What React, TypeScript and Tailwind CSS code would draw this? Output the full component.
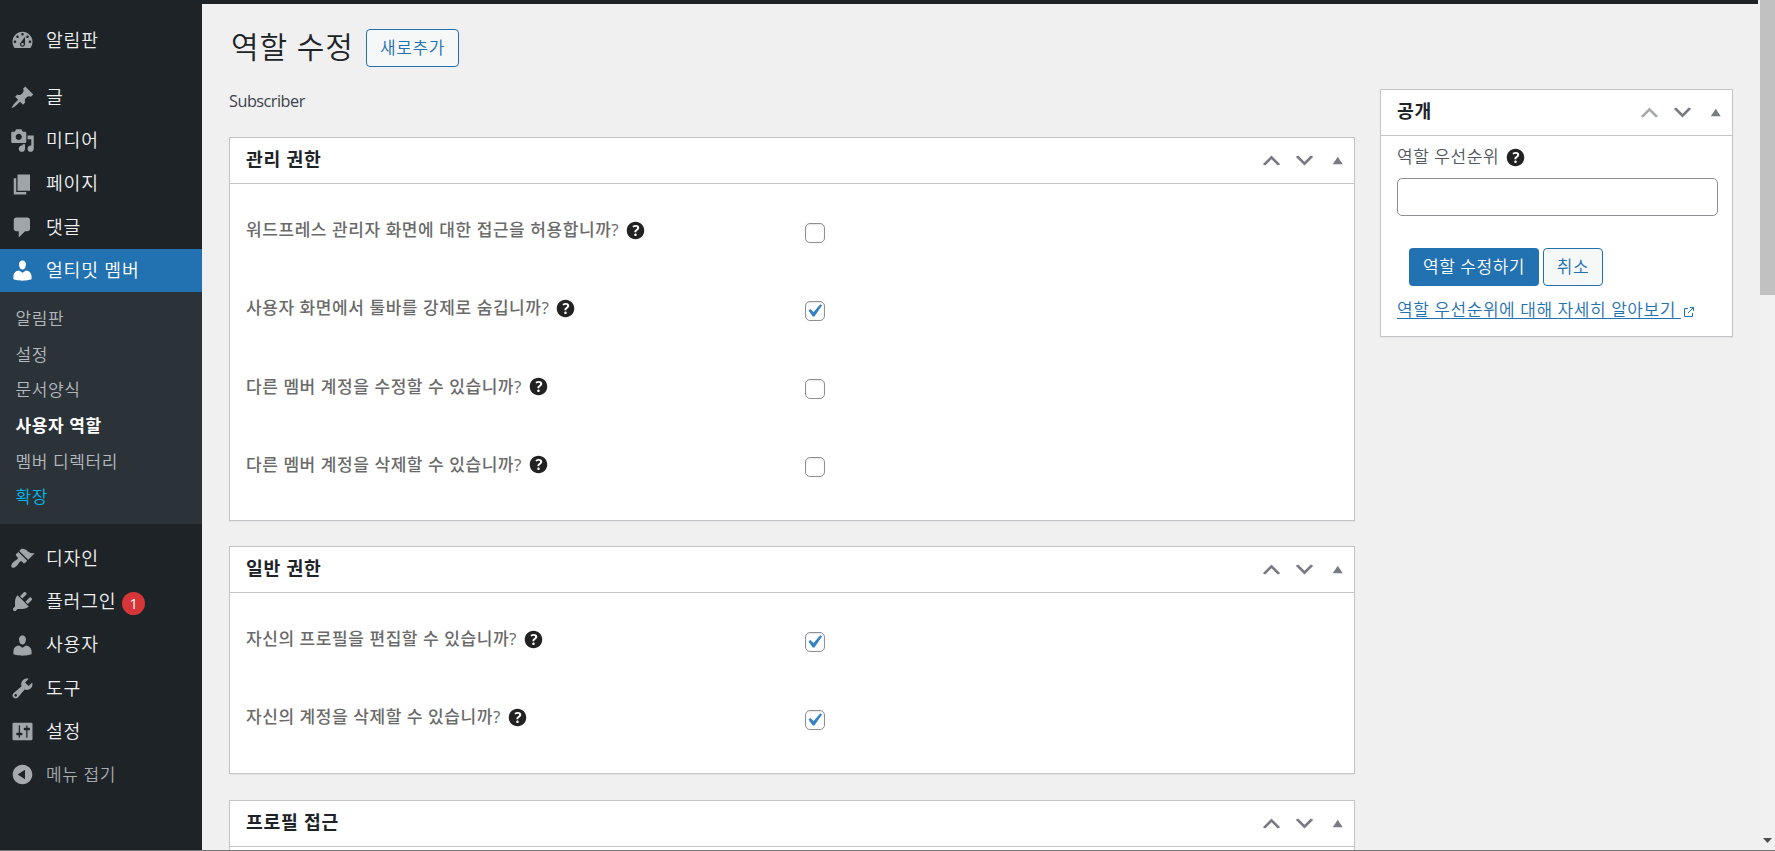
import { useState } from 'react';
import type { ReactNode } from 'react';

const ICONS = {
  dashboard:
    'M3.76 16h12.48c1.1-1.37 1.76-3.11 1.76-5 0-4.42-3.58-8-8-8s-8 3.58-8 8c0 1.89.66 3.63 1.76 5zM10 4c.55 0 1 .45 1 1s-.45 1-1 1-1-.45-1-1 .45-1 1-1zM6 6c.55 0 1 .45 1 1s-.45 1-1 1-1-.45-1-1 .45-1 1-1zm8 0c.55 0 1 .45 1 1s-.45 1-1 1-1-.45-1-1 .45-1 1-1zm-5.37 5.55L12 7v6c0 1.1-.9 2-2 2s-2-.9-2-2c0-.57.24-1.08.63-1.45zM4 10c.55 0 1 .45 1 1s-.45 1-1 1-1-.45-1-1 .45-1 1-1zm12 0c.55 0 1 .45 1 1s-.45 1-1 1-1-.45-1-1 .45-1 1-1zm-5 3c0-.55-.45-1-1-1s-1 .45-1 1 .45 1 1 1 1-.45 1-1z',
  post: 'M10.44 3.02l1.82-1.82 6.36 6.35-1.83 1.82c-1.05-.68-2.48-.57-3.41.36l-.75.75c-.92.93-1.04 2.35-.35 3.41l-1.83 1.82-2.41-2.41-2.8 2.79c-.42.42-3.38 2.71-3.8 2.29s1.86-3.39 2.28-3.81l2.79-2.79L4.1 9.36l1.83-1.82c1.05.69 2.48.57 3.4-.36l.75-.75c.93-.92 1.05-2.35.36-3.41z',
  media:
    'M13 11V4c0-.55-.45-1-1-1h-1.67L9 1H5L3.67 3H2c-.55 0-1 .45-1 1v7c0 .55.45 1 1 1h10c.55 0 1-.45 1-1zM7 4.5c1.38 0 2.5 1.12 2.5 2.5S8.38 9.5 7 9.5 4.5 8.38 4.5 7 5.62 4.5 7 4.5zM14 6h5v10.5c0 1.38-1.12 2.5-2.5 2.5S14 17.88 14 16.5s1.12-2.5 2.5-2.5c.17 0 .34.02.5.05V9h-3V6zm-4 8.05V13h2v3.5c0 1.38-1.12 2.5-2.5 2.5S7 17.88 7 16.5 8.12 14 9.5 14c.17 0 .34.02.5.05z',
  page: 'M6 15V2h10v13H6zm-1 1h8v2H3V5h2v11z',
  comments: 'M5 2h9c1.1 0 2 .9 2 2v7c0 1.1-.9 2-2 2h-2l-5 5v-5H5c-1.1 0-2-.9-2-2V4c0-1.1.9-2 2-2z',
  users:
    'M10 9.25c-2.27 0-2.73-3.44-2.73-3.44C7 4.02 7.82 2 9.97 2c2.16 0 2.98 2.02 2.71 3.81 0 0-.41 3.44-2.68 3.44zm0 2.57L12.72 10c2.39 0 4.52 2.33 4.52 4.53v2.49s-3.65 1.13-7.24 1.13c-3.65 0-7.24-1.13-7.24-1.13v-2.49c0-2.25 1.94-4.48 4.47-4.48z',
  appearance:
    'M14.48 11.06L7.41 3.99l1.5-1.5c.5-.56 2.3-.47 3.51.32 1.21.8 1.43 1.28 2.91 2.1 1.18.64 2.45 1.26 4.45.85zm-.71.71L6.7 4.7 4.93 6.47c-.39.39-.39 1.02 0 1.41l1.06 1.06c.39.39.39 1.03 0 1.42-.6.6-1.43 1.11-2.21 1.69-.35.26-.7.53-1.01.84C1.43 14.23.4 16.08 1.4 17.07c.99 1 2.84-.03 4.18-1.36.31-.31.58-.66.85-1.02.57-.78 1.08-1.61 1.69-2.21.39-.39 1.02-.39 1.41 0l1.06 1.06c.39.39 1.02.39 1.41 0z',
  plugins:
    'M13.11 4.36L9.87 7.6 8 5.73l3.24-3.24c.35-.34 1.05-.2 1.56.32.52.51.66 1.21.31 1.55zm-8 1.77l.91-1.12 9.01 9.01-1.19.84c-.71.71-2.63 1.16-3.82 1.16H6.14L4.9 17.26c-.59.59-1.54.59-2.12 0-.59-.58-.59-1.53 0-2.12l1.24-1.24v-3.88c0-1.13.4-3.19 1.09-3.89zm7.26 3.97l3.24-3.24c.34-.35 1.04-.21 1.55.31.52.51.66 1.21.31 1.55l-3.24 3.25z',
  tools:
    'M16.68 9.77c-1.34 1.34-3.3 1.67-4.95.99l-5.41 6.52c-.99.99-2.59.99-3.58 0s-.99-2.59 0-3.57l6.52-5.42c-.68-1.65-.35-3.61.99-4.95 1.28-1.28 3.12-1.62 4.72-1.06l-2.89 2.89 2.82 2.82 2.86-2.87c.53 1.58.18 3.39-1.08 4.65zM3.81 16.21c.4.39 1.04.39 1.43 0 .4-.4.4-1.04 0-1.43-.39-.4-1.03-.4-1.43 0-.39.39-.39 1.03 0 1.43z',
  settings:
    'M18 16V4c0-.55-.45-1-1-1H3c-.55 0-1 .45-1 1v12c0 .55.45 1 1 1h14c.55 0 1-.45 1-1zM8 11h1c.55 0 1 .45 1 1s-.45 1-1 1H8v1.5c0 .28-.22.5-.5.5s-.5-.22-.5-.5V13H6c-.55 0-1-.45-1-1s.45-1 1-1h1V5.5c0-.28.22-.5.5-.5s.5.22.5.5V11zm5-2h-1c-.55 0-1-.45-1-1s.45-1 1-1h1V5.5c0-.28.22-.5.5-.5s.5.22.5.5V7h1c.55 0 1 .45 1 1s-.45 1-1 1h-1v5.5c0 .28-.22.5-.5.5s-.5-.22-.5-.5V9z',
  collapse:
    'M10 2.16c4.33 0 7.84 3.51 7.84 7.84s-3.51 7.84-7.84 7.84S2.16 14.33 2.16 10 5.71 2.16 10 2.16zm2 11.72V6.12L6.18 9.97z',
  help: 'M17 10c0-3.87-3.14-7-7-7-3.87 0-7 3.13-7 7s3.13 7 7 7c3.86 0 7-3.13 7-7zm-6.3 1.48H9.14v-.43c0-.38.08-.7.24-.98s.46-.57.88-.89c.41-.29.68-.53.81-.71.14-.18.2-.39.2-.62 0-.25-.09-.44-.28-.58-.19-.13-.45-.19-.79-.19-.58 0-1.25.19-2 .57l-.64-1.28c.87-.49 1.8-.74 2.77-.74.81 0 1.45.2 1.92.58.48.39.71.91.71 1.55 0 .43-.09.8-.29 1.11-.19.32-.57.67-1.11 1.06-.38.28-.61.49-.71.63-.1.15-.15.34-.15.57v.35zm-1.47 2.74c-.18-.17-.27-.42-.27-.73 0-.33.08-.58.26-.75s.43-.25.77-.25c.32 0 .57.09.75.26s.27.42.27.74c0 .3-.09.55-.27.72-.18.18-.43.27-.75.27-.33 0-.58-.09-.76-.26z',
  up: 'M15 14l-5-5-5 5-2-1 7-7 7 7z',
  down: 'M5 6l5 5 5-5 2 1-7 7-7-7z',
  toggle: 'M7 13l4.03-6L15 13z',
  check: 'M14.83 4.89l1.34.94-5.81 8.38H9.02L5.78 9.67l1.34-1.25 2.57 2.4z',
};

type IconName = keyof typeof ICONS;

function Icon({ name, className = 'size-[25px]' }: { name: IconName; className?: string }) {
  return (
    <svg viewBox="0 0 20 20" fill="currentColor" fillRule="evenodd" className={`shrink-0 ${className}`}>
      <path d={ICONS[name]} />
    </svg>
  );
}

type MenuEntry = { icon: IconName; label: string; badge?: number };

const CONTENT_MENU: MenuEntry[] = [
  { icon: 'post', label: '글' },
  { icon: 'media', label: '미디어' },
  { icon: 'page', label: '페이지' },
  { icon: 'comments', label: '댓글' },
];

const SUBMENU = [
  { label: '알림판' },
  { label: '설정' },
  { label: '문서양식' },
  { label: '사용자 역할', className: 'font-bold text-white' },
  { label: '멤버 디렉터리' },
  { label: '확장', className: 'text-[#00b9eb]' },
];

const SYSTEM_MENU: MenuEntry[] = [
  { icon: 'appearance', label: '디자인' },
  { icon: 'plugins', label: '플러그인', badge: 1 },
  { icon: 'users', label: '사용자' },
  { icon: 'tools', label: '도구' },
  { icon: 'settings', label: '설정' },
];

const ADMIN_FIELDS = [
  { label: '워드프레스 관리자 화면에 대한 접근을 허용합니까?', checked: false },
  { label: '사용자 화면에서 툴바를 강제로 숨깁니까?', checked: true },
  { label: '다른 멤버 계정을 수정할 수 있습니까?', checked: false },
  { label: '다른 멤버 계정을 삭제할 수 있습니까?', checked: false },
];

const GENERAL_FIELDS = [
  { label: '자신의 프로필을 편집할 수 있습니까?', checked: true },
  { label: '자신의 계정을 삭제할 수 있습니까?', checked: true },
];

function MenuItem({ icon, label, badge, active }: MenuEntry & { active?: boolean }) {
  return (
    <a
      className={`flex h-[43.2px] items-center text-[18.25px] tracking-[0.8px] ${
        active ? 'bg-[#2271b1] text-white' : 'text-[#f0f0f1]'
      }`}
    >
      <span className={`flex w-[46px] justify-center pr-px ${active ? 'text-white' : 'text-[#a0a5aa]'}`}>
        <Icon name={icon} />
      </span>
      <span className="pb-0.5">{label}</span>
      {badge && (
        <span className="mt-[3px] ml-1.5 flex size-[23px] items-center justify-center rounded-full bg-[#d63638] text-[14px] font-normal tracking-normal text-white">
          {badge}
        </span>
      )}
    </a>
  );
}

function Sidebar() {
  return (
    <nav className="w-[202px] shrink-0 bg-[#1d2327] pt-[19px] font-[350]">
      <MenuItem icon="dashboard" label="알림판" />
      <div className="h-[14px]" />
      {CONTENT_MENU.map((item) => (
        <MenuItem key={item.label} {...item} />
      ))}
      <MenuItem icon="users" label="얼티밋 멤버" active />
      <ul className="h-[232px] bg-[#2c3338] pt-[9px] text-[17px] tracking-[0.6px] text-[#b4b9be]">
        {SUBMENU.map(({ label, className = '' }) => (
          <li key={label} className={`flex h-[35.6px] items-center pl-[15.5px] ${className}`}>
            {label}
          </li>
        ))}
      </ul>
      <div className="h-[13px]" />
      {SYSTEM_MENU.map((item) => (
        <MenuItem key={item.label} {...item} />
      ))}
      <a className="flex h-[43px] items-center text-[17px] tracking-[0.6px] text-[#a7aaad]">
        <span className="flex w-[46px] justify-center pr-px">
          <Icon name="collapse" />
        </span>
        메뉴 접기
      </a>
    </nav>
  );
}

function Postbox({ title, first, className = '', children }: { title: string; first?: boolean; className?: string; children?: ReactNode }) {
  return (
    <section className={`border border-[#c3c4c7] bg-white shadow-[0_1px_1px_rgba(0,0,0,0.04)] ${className}`}>
      <header className="flex h-[46px] items-center border-b border-[#c3c4c7] pl-4 text-[#787c82]">
        <h2 className="grow pb-[3px] text-[18.25px] font-bold tracking-[0.7px] text-[#1d2327]">{title}</h2>
        <Icon name="up" className={first ? 'size-[25px] text-[#a7aaad]' : 'size-[25px]'} />
        <Icon name="down" className="ml-2 size-[25px]" />
        <Icon name="toggle" className="mr-[5px] mb-px ml-[7px] size-[25px]" />
      </header>
      {children}
    </section>
  );
}

function Checkbox({ defaultChecked }: { defaultChecked: boolean }) {
  const [checked, setChecked] = useState(defaultChecked);
  return (
    <button
      role="checkbox"
      aria-checked={checked}
      onClick={() => setChecked(!checked)}
      className="flex size-5 items-center justify-center rounded-[5px] border border-[#8c8f94] bg-white text-[#3582c4] shadow-[inset_0_1px_2px_rgba(0,0,0,0.1)]"
    >
      {checked && <Icon name="check" className="-ml-0.5 size-[26px]" />}
    </button>
  );
}

function Fields({ fields }: { fields: { label: string; checked: boolean }[] }) {
  return (
    <div className="pt-[7.5px] pl-4">
      {fields.map(({ label, checked }) => (
        <div key={label} className="flex h-[78.125px] items-center">
          <div className="flex w-[559px] items-center pb-px text-[17px] font-medium tracking-[0.57px] text-[#6a6a6a]">
            {label}
            <Icon name="help" className="ml-1 size-[25px] text-[#222]" />
          </div>
          <div className="pt-[5px]">
            <Checkbox defaultChecked={checked} />
          </div>
        </div>
      ))}
    </div>
  );
}

function Scrollbar() {
  return (
    <div className="flex w-[15px] shrink-0 flex-col justify-between bg-[#f1f1f1]">
      <div className="h-[295px] bg-[#c1c1c1]" />
      <svg viewBox="0 0 15 17" className="h-[17px] w-[15px] fill-[#505050]">
        <path d="M3 5h9l-4.500 5z" />
      </svg>
    </div>
  );
}

export default function App() {
  return (
    <div className="flex h-[851px] w-[1775px] flex-col overflow-hidden bg-[#f0f0f1] font-['Open_Sans','Noto_Sans_CJK_KR',sans-serif] text-[#3c434a]">
      <div className="flex h-[850px] overflow-hidden">
        <Sidebar />
        <div className="flex min-w-0 grow flex-col">
          <div className="mr-[2px] h-1 shrink-0 bg-[#1d2327]" />
          <main className="px-[27px] font-[350]">
            <div className="mt-[25px] flex h-[38px] items-center pl-[2px]">
              <h1 className="w-[135px] pb-[3px] text-[30px] tracking-[0.9px] whitespace-nowrap text-[#1d2327]">역할 수정</h1>
              <a className="flex h-[38px] w-[93px] items-center justify-center rounded-[4px] border border-[#2271b1] bg-[#f6f7f7] text-[17px] tracking-[0.6px] text-[#2271b1]">
                새로추가
              </a>
            </div>
            <div className="mt-[22px] flex items-start gap-[25px]">
              <div className="w-[1126px]">
                <p className="h-[48px] pt-px text-[16.25px] leading-[23px] font-normal tracking-[-0.5px]">Subscriber</p>
                <Postbox title="관리 권한" className="mb-[25px] h-[384px]">
                  <Fields fields={ADMIN_FIELDS} />
                </Postbox>
                <Postbox title="일반 권한" className="mb-[26px] h-[228px]">
                  <Fields fields={GENERAL_FIELDS} />
                </Postbox>
                <Postbox title="프로필 접근" className="h-[228px]" />
              </div>
              <Postbox title="공개" first className="h-[248px] w-[353px]">
                <div className="px-4 text-[17px] tracking-[0.55px]">
                  <label className="flex h-[42px] items-center text-[#50575e]">
                    역할 우선순위
                    <Icon name="help" className="ml-1 size-[25px] text-[#222]" />
                  </label>
                  <input className="h-[38px] w-[321px] rounded-[5px] border border-[#8c8f94] bg-white px-2.5" />
                  <div className="mt-8 flex gap-1 pl-3">
                    <button className="h-[38px] w-[130px] rounded-[4px] bg-[#2271b1] whitespace-nowrap text-white">역할 수정하기</button>
                    <button className="h-[38px] w-[60px] rounded-[4px] border border-[#2271b1] bg-[#f6f7f7] text-[#2271b1]">취소</button>
                  </div>
                  <a className="mt-[11px] flex items-center text-[#2271b1]">
                    <span className="underline underline-offset-2 whitespace-pre">역할 우선순위에 대해 자세히 알아보기 </span>
                    <svg viewBox="0 0 12 12" className="ml-[2px] mt-[5px] size-3 fill-none stroke-current">
                      <path d="M5 2.500H1.500v8h8V7M7 1.500h3.500v3.500M10.500 1.500L5 7" />
                    </svg>
                  </a>
                </div>
              </Postbox>
            </div>
          </main>
        </div>
        <Scrollbar />
      </div>
      <div className="h-px bg-[#767676]" />
    </div>
  );
}
